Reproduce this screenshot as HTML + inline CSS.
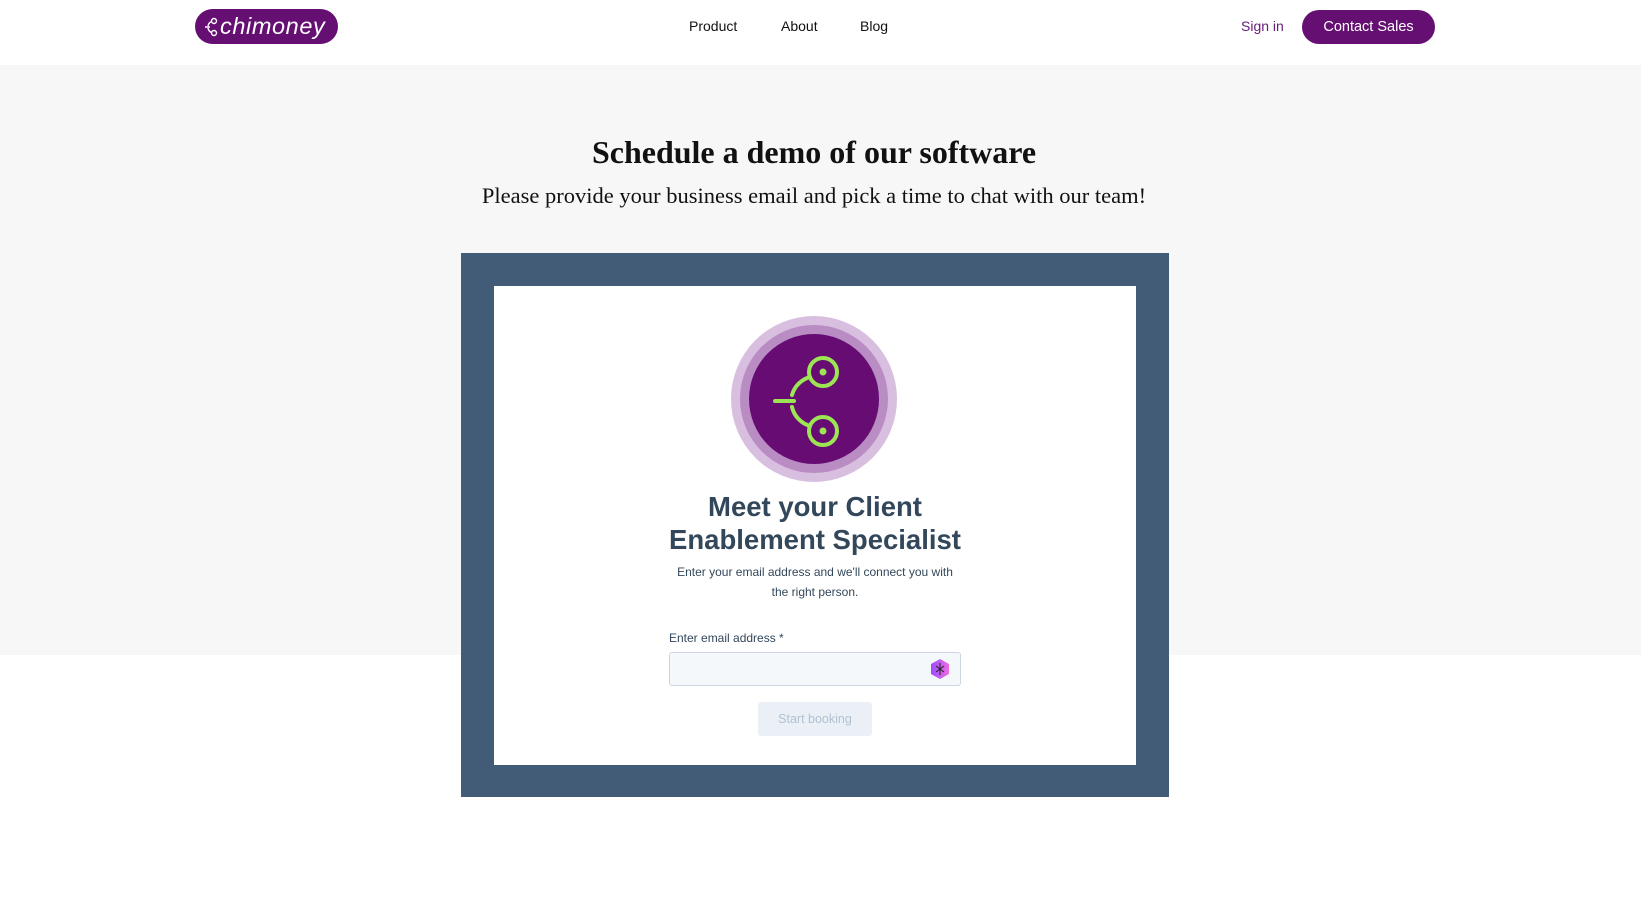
<!DOCTYPE html>
<html><head><meta charset="utf-8"><style>
*{margin:0;padding:0;box-sizing:border-box}
body{width:1641px;height:898px;background:#fff;font-family:"Liberation Sans",sans-serif;position:relative;overflow:hidden}
.abs{position:absolute}
.gray{left:0;top:65px;width:1641px;height:590px;background:#f7f7f7}
.logo{left:195px;top:9px;width:143px;height:35px;background:#660f73;border-radius:18px;color:#fff;font-size:23.5px;font-style:italic;line-height:35px;padding-left:25px;letter-spacing:0.6px}
.nav{top:18px;font-size:14px;color:#111}
.signin{left:1241px;top:18px;font-size:14px;color:#6a1a7a}
.cta{left:1302px;top:10px;width:133px;height:34px;background:#660f73;border-radius:17px;color:#fff;font-size:14.5px;line-height:34px;text-align:center}
h1{position:absolute;left:0;width:1628px;top:134px;text-align:center;font-family:"Liberation Serif",serif;font-weight:bold;font-size:32px;color:#111}
.sub{left:0;width:1628px;top:183px;text-align:center;font-family:"Liberation Serif",serif;font-size:22.5px;color:#111}
.frame{left:461px;top:253px;width:708px;height:544px;background:#425b76}
.card{left:494px;top:286px;width:642px;height:479px;background:#fff}
.h2{left:494px;width:642px;top:490px;text-align:center;font-size:27.5px;font-weight:bold;color:#33475b;line-height:33px}
.p{left:494px;width:642px;top:562px;text-align:center;font-size:12px;color:#33475b;line-height:20px}
.lbl{left:669px;top:631px;font-size:12px;color:#33475b}
.inp{left:669px;top:652px;width:292px;height:34px;background:#f5f8fa;border:1px solid #cbd6e2;border-radius:3px}
.btn{left:758px;top:702px;width:114px;height:34px;background:#eaf0f6;border-radius:3px;color:#b0c1d4;font-size:12.5px;line-height:34px;text-align:center}
</style></head><body>
<div class="abs gray"></div>
<div class="abs logo">chimoney</div>
<svg class="abs" style="left:203px;top:16px" width="18" height="22" viewBox="0 0 18 22"><g fill="none" stroke="#fff" stroke-width="1.4"><circle cx="11" cy="5" r="2.5"/><circle cx="11" cy="17" r="2.5"/><path d="M8.5 5.5 A6 6 0 0 0 5 10 M2 11 H7 M5 12 A6 6 0 0 0 8.5 16.5"/></g></svg>
<div class="abs nav" style="left:689px">Product</div>
<div class="abs nav" style="left:781px">About</div>
<div class="abs nav" style="left:860px">Blog</div>
<div class="abs signin">Sign in</div>
<div class="abs cta">Contact Sales</div>
<h1>Schedule a demo of our software</h1>
<div class="abs sub">Please provide your business email and pick a time to chat with our team!</div>
<div class="abs frame"></div>
<div class="abs card"></div>
<svg class="abs" style="left:731px;top:316px" width="166" height="166" viewBox="0 0 166 166">
<circle cx="83" cy="83" r="83" fill="#d9bfdf"/>
<circle cx="83" cy="83" r="74" fill="#b98cc3"/>
<circle cx="83" cy="83" r="65" fill="#660c73"/>
<g fill="none" stroke="#9ce653" stroke-width="4" stroke-linecap="round">
<circle cx="92" cy="56" r="14"/><circle cx="92" cy="115" r="14"/>
<path d="M79 61 A26 26 0 0 0 61 79 M44 85 H63 M61 91 A26 26 0 0 0 79 110"/>
</g>
<circle cx="92" cy="56" r="3.5" fill="#9ce653"/><circle cx="92" cy="115" r="3.5" fill="#9ce653"/>
</svg>
<div class="abs h2">Meet your Client<br>Enablement Specialist</div>
<div class="abs p">Enter your email address and we'll connect you with<br>the right person.</div>
<div class="abs lbl">Enter email address *</div>
<div class="abs inp"></div>
<svg class="abs" style="left:929px;top:658px" width="22" height="22" viewBox="0 0 22 22"><defs><linearGradient id="g" x1="0" x2="1"><stop offset="0" stop-color="#9b4dff"/><stop offset="1" stop-color="#f06be0"/></linearGradient></defs><path d="M11 1 L20 6 V16 L11 21 L2 16 V6Z" fill="url(#g)"/><path d="M11 5 V17 M7 8 L15 14 M15 8 L7 14" stroke="#222" stroke-width="1"/></svg>
<div class="abs btn">Start booking</div>
</body></html>
